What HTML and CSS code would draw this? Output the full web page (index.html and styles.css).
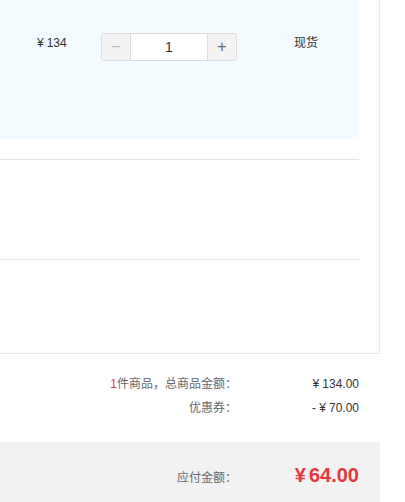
FILE: index.html
```html
<!DOCTYPE html>
<html lang="zh-CN">
<head>
<meta charset="UTF-8">
<meta name="viewport" content="width=device-width, initial-scale=1.0">
<title>订单结算</title>
<link rel="stylesheet" href="styles.css">
</head>
<body>
<div class="order">
    <div class="goods-box">
        <div class="item-row">
            <div class="col-price"><span class="yen">¥</span>134</div>
            <div class="stepper">
                <button class="step-btn minus" disabled>−</button>
                <input type="text" class="step-input" value="1">
                <button class="step-btn plus">+</button>
            </div>
            <div class="col-stock">现货</div>
        </div>
        <div class="extra-row"></div>
        <div class="extra-row tall"></div>
    </div>

    <div class="summary">
        <div class="sum-row">
            <span class="sum-label"><em class="count">1</em>件商品，总商品金额：</span>
            <span class="sum-value"><span class="yen">¥</span>134.00</span>
        </div>
        <div class="sum-row">
            <span class="sum-label">优惠券：</span>
            <span class="sum-value">- <span class="yen">¥</span>70.00</span>
        </div>
    </div>

    <div class="total-bar">
        <span class="sum-label">应付金额：</span>
        <span class="total-value"><span class="yen">¥</span>64.00</span>
    </div>
</div>
</body>
</html>
```

FILE: styles.css
```css
body {
    margin: 0;
    font-family: "Liberation Sans", "Noto Sans CJK SC", sans-serif;
    font-size: 12px;
    color: #333;
    background-color: #fff;
}
.order {
    width: 380px;
}
.yen {
    margin-right: 3px;
}
.goods-box {
    box-sizing: border-box;
    width: 380px;
    padding-right: 20px;
    padding-bottom: 93px;
    border-right: 1px solid #e8e8e8;
    border-bottom: 1px solid #e8e8e8;
}
.item-row {
    display: flex;
    align-items: flex-start;
    height: 139px;
    box-sizing: border-box;
    padding-top: 33px;
    background-color: #f3fbfe;
}
.col-price {
    width: 101px;
    box-sizing: border-box;
    padding-left: 37px;
    line-height: 20px;
}
.stepper {
    display: flex;
    width: 136px;
    height: 28px;
    box-sizing: border-box;
    border: 1px solid #dcdcdc;
    border-radius: 3px;
    overflow: hidden;
    background-color: #fff;
}
.step-btn {
    width: 29px;
    height: 26px;
    padding: 0;
    border: none;
    background-color: #f3f3f3;
    font-family: "Liberation Sans", sans-serif;
    font-size: 16px;
    color: #666;
    cursor: pointer;
}
.step-btn.minus {
    color: #bbb;
    border-right: 1px solid #dcdcdc;
}
.step-btn.plus {
    border-left: 1px solid #dcdcdc;
}
.step-input {
    flex: 1;
    min-width: 0;
    height: 26px;
    padding: 0;
    border: none;
    text-align: center;
    font-family: "Liberation Sans", sans-serif;
    font-size: 14px;
    color: #333;
}
.col-stock {
    margin-left: 57px;
    line-height: 20px;
}
.extra-row {
    height: 20px;
    border-bottom: 1px solid #e4e4e4;
}
.extra-row.tall {
    height: 99px;
}
.summary {
    padding: 18px 21px 0 0;
}
.sum-row {
    display: flex;
    justify-content: flex-end;
    line-height: 24px;
}
.sum-label {
    color: #666;
    text-align: right;
}
.count {
    font-style: normal;
    color: #e4393c;
}
.sum-value {
    width: 122px;
    text-align: right;
    color: #333;
}
.total-bar {
    display: flex;
    justify-content: flex-end;
    align-items: baseline;
    height: 70px;
    box-sizing: border-box;
    margin-top: 22px;
    padding: 18px 21px 0 0;
    background-color: #f2f2f2;
    border-top-right-radius: 3px;
    line-height: 30px;
}
.total-value {
    width: 122px;
    text-align: right;
    font-size: 20px;
    font-weight: bold;
    color: #e4393c;
}
```
